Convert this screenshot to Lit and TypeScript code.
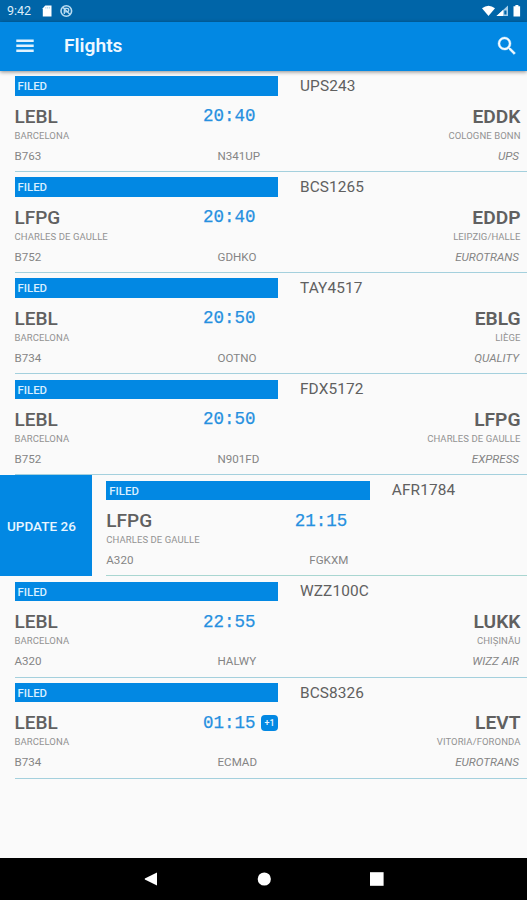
import { LitElement, html, css, svg, nothing } from "lit";
import { customElement, property } from "lit/decorators.js";
import { classMap } from "lit/directives/class-map.js";

interface Flight {
  number: string;
  from: string;
  fromCity: string;
  to: string;
  toCity: string;
  time: string;
  aircraft: string;
  reg: string;
  operator: string;
  nextDay?: boolean;
  update?: string;
}

const FLIGHTS: Flight[] = [
  { number: "UPS243", from: "LEBL", fromCity: "BARCELONA", to: "EDDK", toCity: "COLOGNE BONN", time: "20:40", aircraft: "B763", reg: "N341UP", operator: "UPS" },
  { number: "BCS1265", from: "LFPG", fromCity: "CHARLES DE GAULLE", to: "EDDP", toCity: "LEIPZIG/HALLE", time: "20:40", aircraft: "B752", reg: "GDHKO", operator: "EUROTRANS" },
  { number: "TAY4517", from: "LEBL", fromCity: "BARCELONA", to: "EBLG", toCity: "LIÈGE", time: "20:50", aircraft: "B734", reg: "OOTNO", operator: "QUALITY" },
  { number: "FDX5172", from: "LEBL", fromCity: "BARCELONA", to: "LFPG", toCity: "CHARLES DE GAULLE", time: "20:50", aircraft: "B752", reg: "N901FD", operator: "EXPRESS" },
  { number: "AFR1784", from: "LFPG", fromCity: "CHARLES DE GAULLE", to: "", toCity: "", time: "21:15", aircraft: "A320", reg: "FGKXM", operator: "", update: "UPDATE 26" },
  { number: "WZZ100C", from: "LEBL", fromCity: "BARCELONA", to: "LUKK", toCity: "CHIȘINĂU", time: "22:55", aircraft: "A320", reg: "HALWY", operator: "WIZZ AIR" },
  { number: "BCS8326", from: "LEBL", fromCity: "BARCELONA", to: "LEVT", toCity: "VITORIA/FORONDA", time: "01:15", aircraft: "B734", reg: "ECMAD", operator: "EUROTRANS", nextDay: true },
];

@customElement("flight-row")
export class FlightRow extends LitElement {
  @property({ attribute: false }) flight!: Flight;

  static styles = css`
    :host { display: block; height: 101.1px; overflow: hidden; }
    .row { display: flex; height: 100%; }
    .action {
      flex: none; width: 91.8px; height: 100.5px; display: flex; align-items: center;
      box-sizing: border-box; padding-left: 7px;
      background: #0288e3; color: #e8f5ff; font-size: 13.5px; font-weight: 500;
      white-space: nowrap;
    }
    .card {
      flex: none; width: 512.5px; height: 100%; margin-left: 14.5px; box-sizing: border-box;
      padding: 5px 6.5px 0 0; border-bottom: 1.5px solid #a4d0dd;
    }
    .card.swiped { border-bottom-color: #a9d6d1; }
    .line { display: grid; grid-template-columns: 188.5px 1fr auto; align-items: center; white-space: nowrap; }
    .head { display: flex; align-items: center; height: 20px; }
    .status {
      width: 263.5px; height: 19.5px; box-sizing: border-box; padding-left: 3px;
      background: #0288e3; color: #d9efff; font-size: 11.4px; line-height: 20.5px; font-weight: 500;
    }
    .number { margin-left: 22px; font-size: 15.4px; letter-spacing: 0.1px; color: #606060; }
    .main { height: 24px; margin-top: 8.2px; }
    .code { font-size: 19px; color: #606060; font-weight: 500; }
    .dest { font-weight: 600; font-size: 19.2px; }
    .time {
      display: flex; align-items: center; gap: 5.5px; color: #2690df;
      font: 17.5px "Liberation Mono", monospace; -webkit-text-stroke: 0.25px #2690df;
    }
    .badge {
      width: 17px; height: 16px; border-radius: 4px; background: #0288e3; color: #e8f5ff;
      font: 500 9px/16px Roboto, sans-serif; text-align: center; -webkit-text-stroke: 0;
    }
    .cities { height: 12px; margin-top: 1.2px; font-size: 9.5px; color: #929292; letter-spacing: 0.08px; }
    .info { height: 14px; margin-top: 7.4px; font-size: 11.6px; color: #858585; grid-template-columns: 203px 1fr auto; }
    .operator { font-style: italic; margin-right: 1.5px; }
  `;

  render() {
    const f = this.flight;
    return html`<div class="row">
      ${f.update ? html`<div class="action">${f.update}</div>` : nothing}
      <div class=${classMap({ card: true, swiped: !!f.update })}>
        <div class="head"><div class="status">FILED</div><div class="number">${f.number}</div></div>
        <div class="line main">
          <span class="code">${f.from}</span>
          <span class="time">${f.time}${f.nextDay ? html`<span class="badge">+1</span>` : nothing}</span>
          <span class="code dest">${f.to}</span>
        </div>
        <div class="line cities"><span>${f.fromCity}</span><span></span><span>${f.toCity}</span></div>
        <div class="line info">
          <span>${f.aircraft}</span><span>${f.reg}</span><span class="operator">${f.operator}</span>
        </div>
      </div>
    </div>`;
  }
}

@customElement("app-root")
export class AppRoot extends LitElement {
  static styles = css`
    :host {
      display: flex; flex-direction: column; width: 527px; height: 900px; overflow: hidden;
      background: #fafafa; font-family: Roboto, sans-serif;
    }
    svg { display: block; }
    .statusbar {
      flex: none; height: 21.5px; box-sizing: border-box; padding: 0 5px 0 7px;
      display: flex; align-items: center; background: #0065a8; color: #dceefa; font-size: 12.5px;
    }
    .clock { width: 35px; }
    .sysicons { margin-left: auto; }
    .appbar {
      flex: none; height: 49px; box-sizing: border-box; padding: 0 8px 0 16px;
      display: flex; align-items: center; background: #0288e3;
      box-shadow: 0 1px 4px rgba(0, 0, 0, 0.45); z-index: 1;
    }
    .title { margin: 0 auto 0 30px; padding-bottom: 1.5px; color: #eef8ff; font-size: 19.2px; font-weight: 600; }
    .list { flex: 1; padding-top: 0.5px; }
    .navbar {
      flex: none; height: 41.6px; display: flex; align-items: center; justify-content: center;
      background: #000;
    }
  `;

  render() {
    return html`
      <div class="statusbar">
        <span class="clock">9:42</span>
        <svg width="32" height="14" viewBox="0 0 32 14">
          ${svg`<path d="M3.3 1.5H9.5V12.5H.8V4.2Z" fill="#fff"/>
          <path d="M3.8 3v1.6M5.6 3v1.6M7.4 3v1.6" stroke="#8fbfdf" stroke-width=".6"/>
          <circle cx="24.3" cy="7" r="5.3" fill="none" stroke="#b9dcf1" stroke-width="1.6"/>
          <path d="M22.3 10V4.3H25a1.6 1.6 0 0 1 0 3.6H23M20.8 3.2L28 10.5" fill="none" stroke="#b9dcf1" stroke-width="1.3"/>`}
        </svg>
        <svg class="sysicons" width="40" height="14" viewBox="0 0 40 14">
          ${svg`<path d="M0 4.3Q6.5-.7 13 4.3L6.5 12Z" fill="#fff"/>
          <path d="M14.5 12L26 1.5V12Z" fill="#a9d0ea"/>
          <path d="M14.5 12L21 6V12Z" fill="#fff"/>
          <path d="M22.3 6.5h2.2v4h-2.2z" fill="#0065a8"/>
          <path d="M33.4 1h3v1.2h1.7v10.3h-6.6V2.2h1.9Z" fill="#fff"/>`}
        </svg>
      </div>
      <div class="appbar">
        <svg width="18" height="16" viewBox="0 0 18 16">
          <path d="M0.3 2.8H17.7M0.3 7.8H17.7M0.3 12.8H17.7" stroke="#e1f2fd" stroke-width="2.6"/>
        </svg>
        <span class="title">Flights</span>
        <svg width="24" height="24" viewBox="0 0 24 24">
          <path fill="#f2faff" stroke="#f2faff" stroke-width=".4" d="M15.5 14h-.79l-.28-.27A6.47 6.47 0 0 0 16 9.5 6.5 6.5 0 1 0 9.5 16c1.61 0 3.09-.59 4.23-1.57l.27.28v.79l5 4.99L20.49 19l-4.99-5zm-6 0a4.5 4.5 0 1 1 0-9 4.5 4.5 0 0 1 0 9z"/>
        </svg>
      </div>
      <div class="list">
        ${FLIGHTS.map((f) => html`<flight-row .flight=${f}></flight-row>`)}
      </div>
      <div class="navbar">
        <svg width="240" height="16" viewBox="0 0 240 16" fill="#fff">
          <path d="M13 1.5V14.5L.8 8.6V7.4Z"/>
          <circle cx="120.3" cy="8" r="6.6"/>
          <rect x="226" y="1.2" width="13.6" height="13.6"/>
        </svg>
      </div>`;
  }
}
